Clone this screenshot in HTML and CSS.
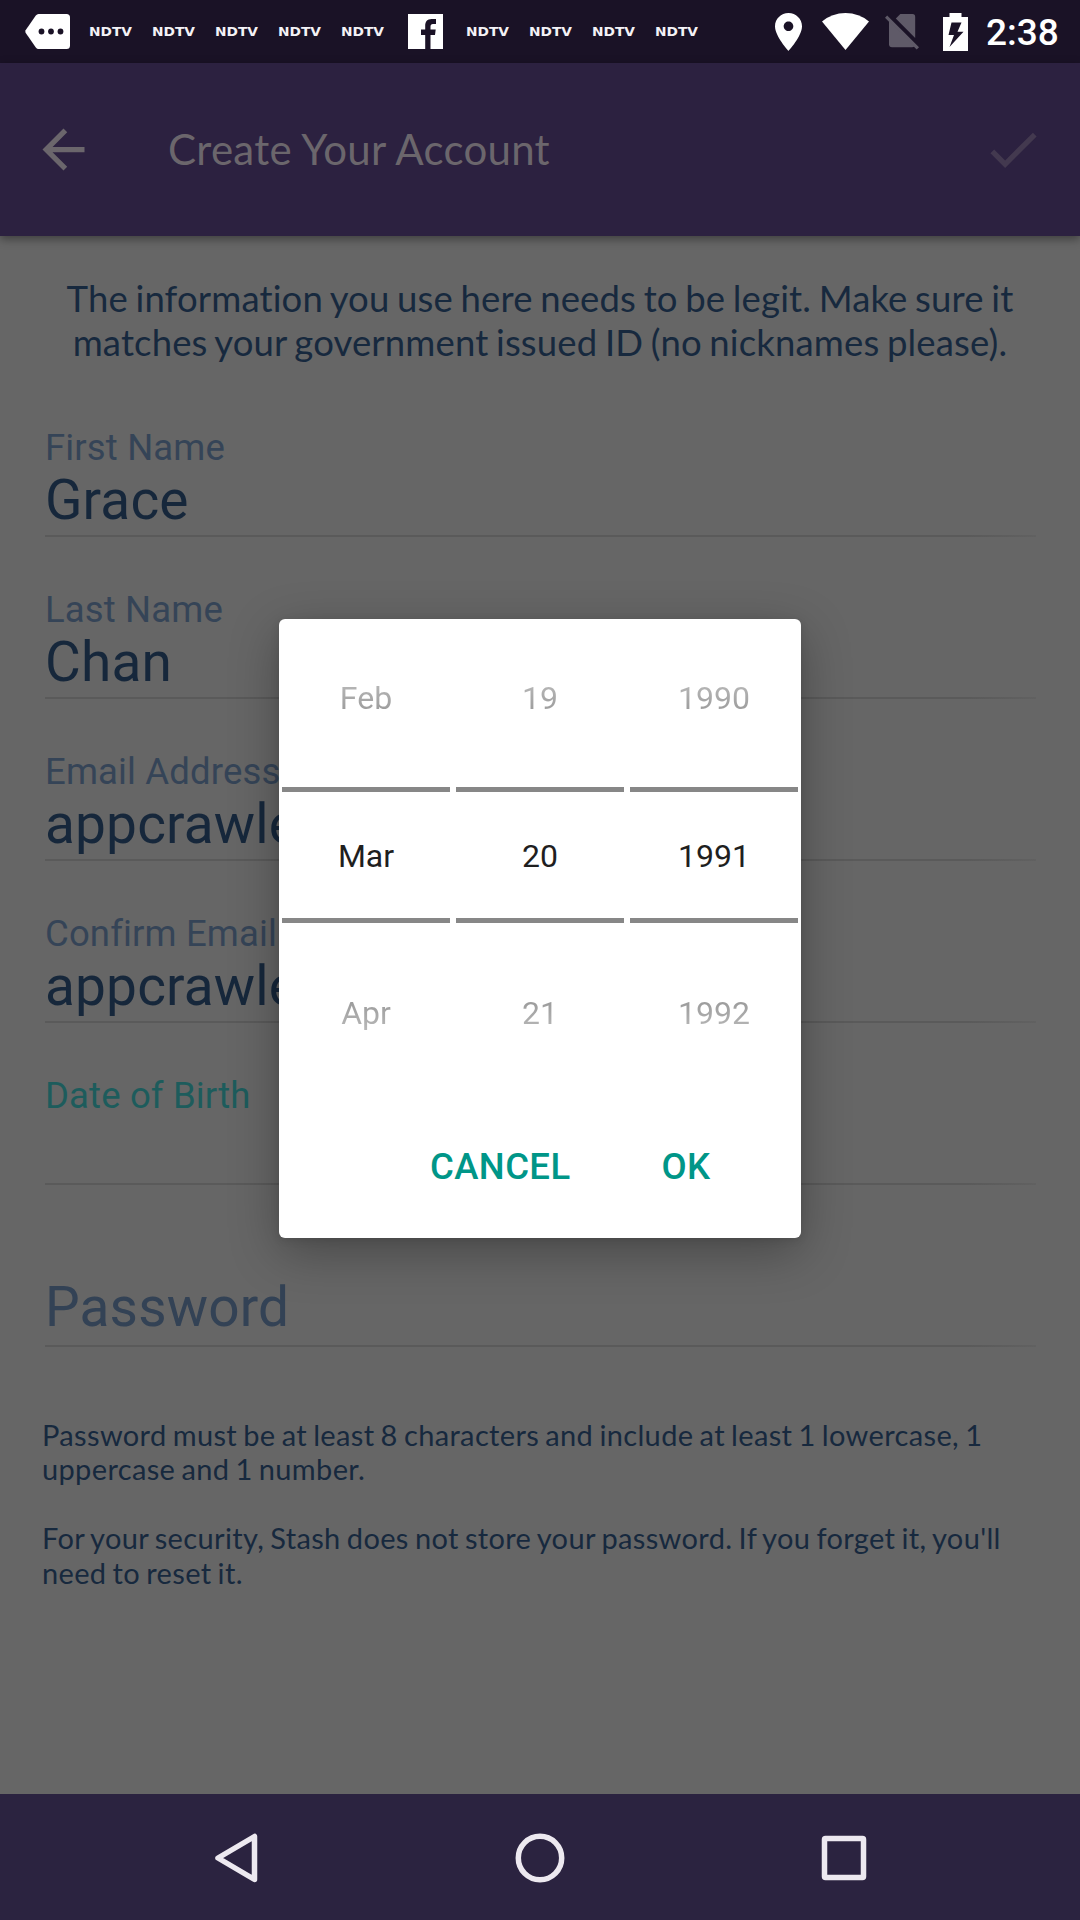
FILE: index.html
```html
<!DOCTYPE html>
<html lang="en">
<head>
<meta charset="utf-8">
<title>Create Your Account</title>
<link rel="stylesheet" href="styles.css">
</head>
<body>
<div class="screen">
  <div class="status-bar">
    <div class="notifications">
      <svg class="tag-icon" width="45" height="35" viewBox="0 0 45 35"><path d="M13.500 0H41.500Q45 0 45 3.500V31.500Q45 35 41.500 35H13.500Q12 35 10.800 33.500L.6 18.700Q0 17.500 .6 16.300L10.800 1.500Q12 0 13.500 0Z" fill="#fff"/><g fill="#1a1226"><circle cx="16.500" cy="17.500" r="2.900"/><circle cx="26" cy="17.500" r="2.900"/><circle cx="35.500" cy="17.500" r="2.900"/></g></svg>
      <svg class="ndtv" viewBox="0 0 41 10"><text x="-1" y="9" textLength="43" lengthAdjust="spacingAndGlyphs">NDTV</text></svg>
      <svg class="ndtv" viewBox="0 0 41 10"><text x="-1" y="9" textLength="43" lengthAdjust="spacingAndGlyphs">NDTV</text></svg>
      <svg class="ndtv" viewBox="0 0 41 10"><text x="-1" y="9" textLength="43" lengthAdjust="spacingAndGlyphs">NDTV</text></svg>
      <svg class="ndtv" viewBox="0 0 41 10"><text x="-1" y="9" textLength="43" lengthAdjust="spacingAndGlyphs">NDTV</text></svg>
      <svg class="ndtv" viewBox="0 0 41 10"><text x="-1" y="9" textLength="43" lengthAdjust="spacingAndGlyphs">NDTV</text></svg>
      <svg class="fb-icon" width="35" height="35" viewBox="0 0 35 35"><path d="M0 0H35V35H22.500V21H27L27.700 15.500H22.500V12.500C22.500 11 23.200 10 25 10H28V5H23.500C19.300 5 17.200 7.800 17.200 11.500V15.500H13V21H17.200V35H0Z" fill="#fff"/></svg>
      <svg class="ndtv" viewBox="0 0 41 10"><text x="-1" y="9" textLength="43" lengthAdjust="spacingAndGlyphs">NDTV</text></svg>
      <svg class="ndtv" viewBox="0 0 41 10"><text x="-1" y="9" textLength="43" lengthAdjust="spacingAndGlyphs">NDTV</text></svg>
      <svg class="ndtv" viewBox="0 0 41 10"><text x="-1" y="9" textLength="43" lengthAdjust="spacingAndGlyphs">NDTV</text></svg>
      <svg class="ndtv" viewBox="0 0 41 10"><text x="-1" y="9" textLength="43" lengthAdjust="spacingAndGlyphs">NDTV</text></svg>
    </div>
    <div class="system">
      <svg width="27" height="38" viewBox="5 2 14 20" preserveAspectRatio="none"><path d="M12 2C8.130 2 5 5.130 5 9c0 5.250 7 13 7 13s7-7.750 7-13c0-3.870-3.130-7-7-7zm0 9.500c-1.380 0-2.500-1.120-2.500-2.500s1.120-2.500 2.500-2.500 2.500 1.120 2.500 2.500-1.120 2.500-2.500 2.500z" fill="#fff"/></svg>
      <svg class="wifi" width="47" height="37" viewBox="0 0 47 37"><path d="M0 8.500Q10 0 23.500 0T47 8.500L23.500 37Z" fill="#fff"/></svg>
      <svg class="sim" width="34" height="37" viewBox="0 0 34 37"><g fill="#5f5a68"><path d="M10.800 5.600L15.300 1.100H27.500Q30.200 1.100 30.200 3.800V25Z"/><path d="M4 8L29.400 33.400Q28.500 34.200 27 34.200H7Q4 34.200 4 31.200Z"/><path d="M2.200 2.500L34 34.300L31.700 36.600L0 4.800Z"/></g></svg>
      <svg class="battery" width="25" height="38" viewBox="0 0 25 38"><path d="M6.500 0H18.500V4H25V38H0V4H6.500ZM8.500 9.500L5.500 22H11L6.500 34L20.500 18.800H14.500L18.500 9.500Z" fill="#fff" fill-rule="evenodd"/></svg>
      <span class="clock">2:38</span>
    </div>
  </div>

  <div class="toolbar">
    <svg class="back" width="63" height="63" viewBox="0 0 24 24"><path d="M20 11H7.830l5.590-5.590L12 4l-8 8 8 8 1.410-1.410L7.830 13H20v-2z" fill="#6b666c"/></svg>
    <h1 class="title">Create Your Account</h1>
    <svg class="done" width="64" height="63" viewBox="0 0 24 24"><path d="M9 16.170L4.830 12l-1.420 1.410L9 19 21 7l-1.410-1.410z" fill="#43394f"/></svg>
  </div>

  <div class="content">
    <p class="intro">The information you use here needs to be legit. Make sure it<br>matches your government issued ID (no nicknames please).</p>
    <div class="form">
      <div class="field"><div class="label">First Name</div><div class="value">Grace</div></div>
      <div class="field"><div class="label">Last Name</div><div class="value">Chan</div></div>
      <div class="field"><div class="label">Email Address</div><div class="value">appcrawler</div></div>
      <div class="field"><div class="label">Confirm Email</div><div class="value">appcrawler</div></div>
      <div class="field"><div class="label active">Date of Birth</div><div class="value"></div></div>
      <div class="field"><div class="label"></div><div class="value placeholder">Password</div></div>
    </div>
    <div class="notes">
      <p>Password must be at least 8 characters and include at least 1 lowercase, 1<br>uppercase and 1 number.</p>
      <p>For your security, Stash does not store your password. If you forget it, you'll<br>need to reset it.</p>
    </div>
  </div>

  <div class="nav-bar">
    <svg width="50" height="50" viewBox="0 0 50 50"><path d="M43.500 3.500V46.500L7 25Z"/></svg>
    <svg width="50" height="50" viewBox="0 0 50 50"><circle cx="25" cy="25" r="21.700"/></svg>
    <svg width="50" height="50" viewBox="0 0 50 50"><rect x="5.500" y="5.500" width="39" height="39" rx="1"/></svg>
  </div>

  <div class="modal-layer">
    <div class="dialog">
      <div class="pickers">
        <div class="picker"><span class="before">Feb</span><span class="current">Mar</span><span class="after">Apr</span></div>
        <div class="picker"><span class="before">19</span><span class="current">20</span><span class="after">21</span></div>
        <div class="picker"><span class="before">1990</span><span class="current">1991</span><span class="after">1992</span></div>
      </div>
      <div class="actions"><span class="cancel">CANCEL</span><span class="ok">OK</span></div>
    </div>
  </div>
</div>
</body>
</html>
```
FILE: styles.css
```css
* { box-sizing: border-box; }
body { margin: 0; }
h1, p { margin: 0; font-weight: 400; }
svg { display: block; flex: none; }

.screen {
  position: relative;
  display: flex;
  flex-direction: column;
  width: 1080px;
  height: 1920px;
  overflow: hidden;
  background: #666;
  font-family: Roboto, sans-serif;
}

/* Status bar */
.status-bar {
  display: flex;
  justify-content: space-between;
  height: 63px;
  padding: 0 21px 0 25px;
  background: #1a1226;
}
.notifications, .system { display: flex; align-items: center; }
.notifications { gap: 22px; }
.tag-icon { margin-right: -2px; }
.fb-icon { margin: 0 2px 0 3px; }
.ndtv { width: 41px; height: 10px; overflow: visible; }
.ndtv text { font: bold 12px "DejaVu Sans", sans-serif; fill: #f4f2f6; }
.wifi { margin-left: 20px; }
.sim { margin-left: 16px; }
.battery { margin-left: 24px; }
.clock {
  width: 73px;
  margin-left: 18px;
  padding-top: 1px;
  color: #fff;
  font-size: 37px;
  font-weight: 500;
  line-height: 63px;
}

/* Toolbar */
.toolbar {
  position: relative;
  display: flex;
  align-items: center;
  height: 173px;
  padding: 0 35px 0 32px;
  background: #2c2140;
  box-shadow: 0 3px 9px rgba(0, 0, 0, .4);
}
.title {
  flex: 1;
  margin-left: 73px;
  padding-bottom: 2px;
  color: #6b666c;
  font: 42px/50px Lato, sans-serif;
  letter-spacing: .28px;
}

/* Page */
.content { flex: 1; padding-top: 41px; color: #17293e; }
.intro {
  font: 36.500px/43.500px Lato, sans-serif;
  letter-spacing: .15px;
  word-spacing: -1.900px;
  text-align: center;
}
.form {
  display: flex;
  flex-direction: column;
  gap: 52px;
  margin: 63px 44px 0 45px;
}
.field {
  height: 110px;
  border-bottom: 2px solid;
  border-image: linear-gradient(90deg, #5a5a5a 93%, #616161) 1;
}
.label {
  height: 42px;
  color: #354457;
  font-size: 36.500px;
  letter-spacing: .15px;
  line-height: 42px;
}
.label.active { color: #1d5c5c; }
.value {
  height: 62px;
  color: #16273b;
  font-size: 55px;
  letter-spacing: .15px;
  line-height: 62px;
}
.value.placeholder { color: #334255; line-height: 56px; }
.notes {
  display: flex;
  flex-direction: column;
  gap: 34.500px;
  margin: 70.600px 0 0 42px;
  font: 29px/34.500px Lato, sans-serif;
  letter-spacing: .35px;
  word-spacing: -1.600px;
}

/* Navigation bar */
.nav-bar {
  display: flex;
  justify-content: center;
  gap: 254px;
  height: 126px;
  padding-top: 38.500px;
  background: #2b2340;
}
.nav-bar svg {
  fill: none;
  stroke: #ede9f0;
  stroke-width: 5.500px;
  stroke-linejoin: round;
}

/* Date picker dialog */
.modal-layer {
  position: absolute;
  inset: 0;
  display: flex;
  align-items: flex-start;
  justify-content: center;
  padding-top: 619px;
}
.dialog {
  width: 522px;
  height: 619px;
  padding: 0 3px;
  border-radius: 6px;
  background: #fff;
  box-shadow: 0 14px 50px rgba(0, 0, 0, .3), 0 2px 8px rgba(0, 0, 0, .1);
}
.pickers { display: flex; gap: 6px; }
.picker {
  display: grid;
  grid-template-rows: 168px 136px 179px;
  width: 168px;
  color: #1f1f1f;
  font-size: 32px;
  line-height: 38px;
  text-align: center;
}
.before, .after { color: transparent; background-clip: text; }
.before {
  padding-top: 60px;
  background-image: linear-gradient(#bcbcbc 60px, #949494 100px);
}
.current {
  padding-top: 45px;
  border-top: 5px solid #878787;
  border-bottom: 5px solid #878787;
}
.after {
  padding-top: 71px;
  background-image: linear-gradient(#949494 71px, #bcbcbc 111px);
}
.actions {
  display: flex;
  gap: 91px;
  padding: 44px 0 0 148px;
  color: #009688;
  font-size: 36.500px;
  font-weight: 500;
  letter-spacing: .4px;
  line-height: 42px;
}
```
